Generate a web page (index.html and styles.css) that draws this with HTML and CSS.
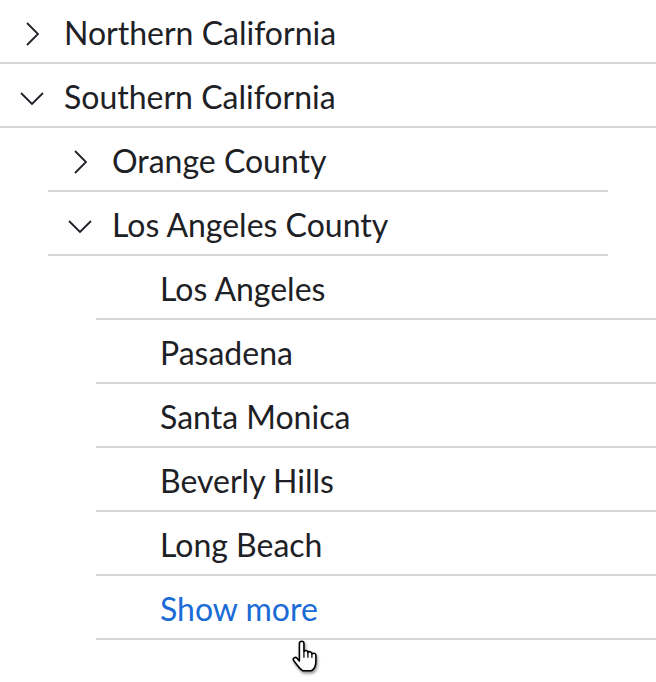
FILE: index.html
```html
<!DOCTYPE html>
<html lang="en">

<head>
  <meta charset="UTF-8">
  <meta name="viewport" content="width=device-width, initial-scale=1.0">
  <title>Regions</title>
  <link rel="stylesheet" href="styles.css">
</head>

<body>
  <ul class="tree">
    <li>
      <div class="row">
        <span class="caret">
          <svg width="32" height="32" viewBox="0 0 32 32"><polyline points="11,6 22,17 11,28" /></svg>
        </span>
        <span class="label">Northern California</span>
      </div>
    </li>
    <li>
      <div class="row">
        <span class="caret">
          <svg width="32" height="32" viewBox="0 0 32 32"><polyline points="5,12 16,23 27,12" /></svg>
        </span>
        <span class="label">Southern California</span>
      </div>
      <ul class="sub">
        <li>
          <div class="row">
            <span class="caret">
              <svg width="32" height="32" viewBox="0 0 32 32"><polyline points="11,6 22,17 11,28" /></svg>
            </span>
            <span class="label">Orange County</span>
          </div>
        </li>
        <li>
          <div class="row">
            <span class="caret">
              <svg width="32" height="32" viewBox="0 0 32 32"><polyline points="5,12 16,23 27,12" /></svg>
            </span>
            <span class="label">Los Angeles County</span>
          </div>
          <ul class="sub">
            <li><div class="row"><span class="caret"></span><span class="label">Los Angeles</span></div></li>
            <li><div class="row"><span class="caret"></span><span class="label">Pasadena</span></div></li>
            <li><div class="row"><span class="caret"></span><span class="label">Santa Monica</span></div></li>
            <li><div class="row"><span class="caret"></span><span class="label">Beverly Hills</span></div></li>
            <li><div class="row"><span class="caret"></span><span class="label">Long Beach</span></div></li>
            <li><div class="row"><span class="caret"></span><a class="label more" href="#">Show more</a></div></li>
          </ul>
        </li>
      </ul>
    </li>
  </ul>

  <!-- mouse pointer hovering "Show more" -->
  <svg class="cursor" width="25" height="32" viewBox="0 0 22 28">
    <path d="M6.5 14 V3 a2 2 0 0 1 4 0 V10 a2 2 0 0 1 3.5 0.3 v0.7 a2 2 0 0 1 3.5 0.5 v0.8 a2 2 0 0 1 3.5 0.7 V19 c0 3.5 -1.5 6.5 -4 8 H9.5 c-2 -1 -3.5 -3 -5 -5 L1.6 18.2 a1.8 1.8 0 0 1 2.8 -2.3 L6.5 18.5 Z" />
    <path class="crease" d="M10.5 10.5 v4.5 M14 11.3 v3.7 M17.5 12.3 v3" />
  </svg>
</body>

</html>
```

FILE: styles.css
```css
body {
  margin: 0;
  padding: 0;
  min-height: 682px;
  background-color: #fff;
  font-family: Lato, "Open Sans", sans-serif;
  color: #1d2125;
  position: relative;
}

.tree,
.sub {
  list-style: none;
  margin: 0;
  padding: 0;
}

.sub {
  margin: 0 48px;
}

.sub .sub {
  margin: 0 -48px 0 48px;
}

.row {
  display: flex;
  align-items: center;
  height: 64px;
  box-sizing: border-box;
  padding: 3px 0 0 16px;
  border-bottom: 2px solid #d2d6d9;
}

.caret {
  width: 32px;
  height: 32px;
  flex: none;
  margin-right: 16px;
}

.caret svg {
  display: block;
  fill: none;
  stroke: #1d2125;
  stroke-width: 1.8;
}

.label {
  font-size: 32px;
  white-space: nowrap;
}

.more {
  color: #1a6bd6;
  text-decoration: none;
}

.cursor {
  position: absolute;
  left: 292px;
  top: 640px;
  filter: drop-shadow(1px 2px 1.5px rgba(0, 0, 0, 0.45));
}

.cursor path {
  fill: #fff;
  stroke: #000;
  stroke-width: 1.4;
  stroke-linejoin: round;
}

.cursor .crease {
  fill: none;
  stroke-width: 1.1;
  stroke-linecap: round;
}
```
